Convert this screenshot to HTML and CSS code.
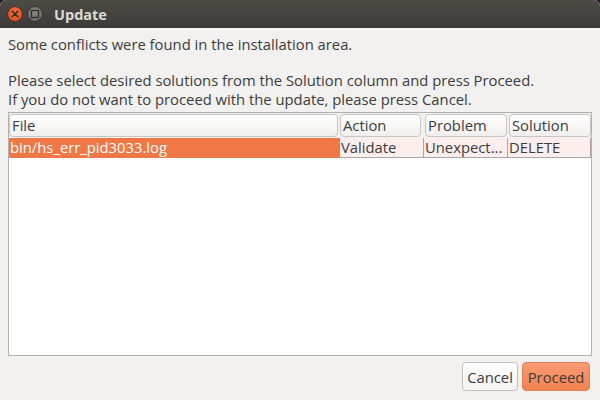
FILE: index.html
```html
<!DOCTYPE html>
<html>
<head>
<meta charset="utf-8">
<link rel="stylesheet" href="styles.css">
</head>
<body>
<div class="window">
  <div class="titlebar">
    <span class="wbtn close"><svg width="16" height="16" viewBox="0 0 16 16"><path d="M5.2 5.2 L10.8 10.8 M10.8 5.2 L5.2 10.8" stroke="#3c2b22" stroke-width="1.6" stroke-linecap="round"/></svg></span>
    <span class="wbtn max"><svg width="16" height="16" viewBox="0 0 16 16"><rect x="4.5" y="4.5" width="7" height="7" fill="none" stroke="#2e2d2a" stroke-width="1.3"/></svg></span>
    <span class="title">Update</span>
  </div>
  <div class="content">
    <p class="msg first">Some conflicts were found in the installation area.</p>
    <p class="msg second">Please select desired solutions from the Solution column and press Proceed.<br>If you do not want to proceed with the update, please press Cancel.</p>
    <div class="table">
      <div class="hrow">
        <div class="hcell c-file">File</div>
        <div class="hcell c-action">Action</div>
        <div class="hcell c-problem">Problem</div>
        <div class="hcell c-solution">Solution</div>
      </div>
      <div class="drow">
        <div class="dcell c-file sel">bin/hs_err_pid3033.log</div>
        <div class="dcell c-action">Validate</div>
        <div class="dcell c-problem">Unexpect...</div>
        <div class="dcell c-solution">DELETE</div>
      </div>
    </div>
    <div class="buttons">
      <button class="btn cancel">Cancel</button>
      <button class="btn proceed">Proceed</button>
    </div>
  </div>
</div>
</body>
</html>
```
FILE: styles.css
```css
html, body { margin: 0; padding: 0; }
body {
  width: 600px; height: 400px; overflow: hidden;
  background: #2c1a2a;
  font-family: "Open Sans", "DejaVu Sans", sans-serif;
  color: #3c3c3c;
}
.window { width: 600px; height: 400px; display: flex; flex-direction: column; background: #f2f1f0; border-radius: 6px 6px 0 0; overflow: hidden; }
.titlebar {
  height: 28px; flex: none;
  background: linear-gradient(#4c4b46, #3c3b37);
  display: flex; align-items: center; padding-left: 7px;
}
.wbtn { width: 16px; height: 16px; border-radius: 50%; display: block; margin-right: 4px; }
.wbtn svg { display: block; }
.close { background: radial-gradient(circle at 50% 35%, #f26a40, #dc4a1e); box-shadow: 0 0 0 1px #3a2a22 inset; }
.max { background: radial-gradient(circle at 50% 35%, #8a8884, #64625e); box-shadow: 0 0 0 1px #2e2d2a inset; }
.title { color: #dfdbd2; font-weight: bold; font-size: 14.5px; margin-left: 7px; }
.content { flex: 1; padding: 0 8px; display: flex; flex-direction: column; }
.msg { margin: 0; font-size: 14.8px; line-height: 19px; }
.first { margin-top: 7px; }
.second { margin-top: 17px; }
.table {
  margin-top: 3px; height: 244px; flex: none;
  background: #fff; border: 1px solid #b5b2ae; box-sizing: border-box;
  font-size: 14.8px;
}
.hrow { display: flex; height: 25px; background: #f2f1f0; padding-top: 1px; box-sizing: border-box; }
.hcell {
  box-sizing: border-box; height: 23px; border: 1px solid #c9c6c2; border-radius: 4px;
  background: linear-gradient(#ffffff, #f0efed); padding-left: 2px; line-height: 21px;
  margin-right: 2px; color: #3c3c3c;
}
.c-file { width: 329px; }
.c-action { width: 82px; }
.c-problem { width: 82px; }
.c-solution { width: 82px; margin-right: 0; }
.hrow .c-action { width: 81px; }
.hrow .c-problem { width: 82px; margin-left: 2px; }
.hrow .c-solution { width: 82px; margin-left: 0; }
.drow { display: flex; height: 20px; margin-top: 0; }
.dcell {
  box-sizing: border-box; height: 20px; line-height: 19px; padding-left: 1px;
  background: #fdeeee; border-right: 1px solid #a9a5a2; border-bottom: 1px solid #a9a5a2;
  white-space: nowrap; color: #3c3c3c;
}
.drow .c-file { width: 331px; }
.drow .c-action { width: 84px; }
.drow .c-problem { width: 84px; }
.drow .c-solution { width: 83px; }
.dcell.sel { background: #f07746; color: #ffffff; border-color: #f07746; }
.buttons { display: flex; justify-content: flex-end; gap: 4px; margin-top: 6px; padding-right: 2px; }
.btn {
  font-family: inherit; font-size: 14.8px; height: 29px; border-radius: 4px; padding: 0 2px;
  color: #3c3c3c;
}
.cancel { width: 56px; background: linear-gradient(#ffffff, #f4f3f1); border: 1px solid #c2bfbb; }
.proceed { width: 68px; background: linear-gradient(#fb9a74, #f3824f); border: 1px solid #e0805a; }
```
